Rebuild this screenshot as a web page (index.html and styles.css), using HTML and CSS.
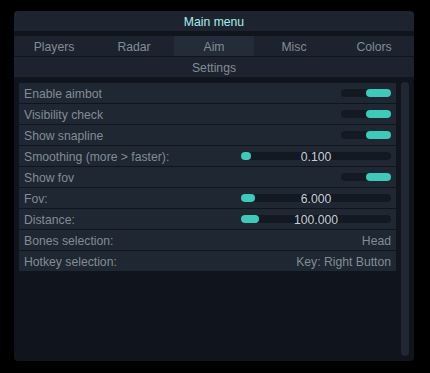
FILE: index.html
```html
<!DOCTYPE html>
<html lang="en">
<head>
  <meta charset="UTF-8">
  <meta name="viewport" content="width=device-width, initial-scale=1.0">
  <title>Main menu</title>
  <link rel="stylesheet" href="styles.css">
</head>
<body>
  <div class="window">
    <div class="title">Main menu</div>

    <!-- tabs -->
    <div class="tabs">
      <div class="tab">Players</div>
      <div class="tab">Radar</div>
      <div class="tab active-tab">Aim</div>
      <div class="tab">Misc</div>
      <div class="tab">Colors</div>
    </div>
    <div class="header">Settings</div>

    <div class="body">
      <div class="list">
        <div class="row">
          <span>Enable aimbot</span>
          <div class="toggle"><div class="knob"></div></div>
        </div>
        <div class="row">
          <span>Visibility check</span>
          <div class="toggle"><div class="knob"></div></div>
        </div>
        <div class="row">
          <span>Show snapline</span>
          <div class="toggle"><div class="knob"></div></div>
        </div>
        <div class="row">
          <span>Smoothing (more &gt; faster):</span>
          <div class="slider"><div class="grab" style="width: 10px"></div><span class="value">0.100</span></div>
        </div>
        <div class="row">
          <span>Show fov</span>
          <div class="toggle"><div class="knob"></div></div>
        </div>
        <div class="row">
          <span>Fov:</span>
          <div class="slider"><div class="grab" style="width: 14px"></div><span class="value">6.000</span></div>
        </div>
        <div class="row">
          <span>Distance:</span>
          <div class="slider"><div class="grab" style="width: 18px"></div><span class="value">100.000</span></div>
        </div>
        <div class="row">
          <span>Bones selection:</span>
          <span>Head</span>
        </div>
        <div class="row">
          <span>Hotkey selection:</span>
          <span>Key: Right Button</span>
        </div>
      </div>
      <div class="scrollbar"></div>
    </div>
  </div>
</body>
</html>
```

FILE: styles.css
```css
body {
  margin: 0;
  background-color: #000;
  font-family: "Liberation Sans", Arial, sans-serif;
  font-size: 12.2px;
  color: #838c96;
}

.window {
  width: 400px;
  height: 350px;
  margin: 11px 0 0 14px;
  background-color: #0f141d;
  border-radius: 4px;
  overflow: hidden;
  display: flex;
  flex-direction: column;
}

.title {
  height: 20px;
  line-height: 23px;
  text-align: center;
  color: #a6eeec;
  background-color: #1d2430;
  margin-bottom: 5px;
}

.tabs {
  display: flex;
  height: 20px;
  background-color: #1c232e;
  border-bottom: 1px solid #10151d;
}

.tab {
  flex: 1;
  text-align: center;
  line-height: 22px;
}

.active-tab {
  background-color: #232c38;
}

.header {
  height: 20px;
  line-height: 22px;
  text-align: center;
  background-color: #1c232e;
}

.body {
  flex: 1;
  display: flex;
  gap: 5px;
  padding: 6px 5px 5px 5px;
}

.list {
  flex: 1;
  display: flex;
  flex-direction: column;
  gap: 1px;
}

.row {
  height: 20px;
  background-color: #1e2732;
  display: flex;
  align-items: center;
  justify-content: space-between;
  padding: 0 5px;
  line-height: 20px;
}

.row > span {
  margin-top: 2px;
}

.toggle {
  width: 50px;
  height: 8px;
  border-radius: 4px;
  background-color: #141a24;
  display: flex;
  justify-content: flex-end;
}

.knob {
  width: 25px;
  height: 8px;
  border-radius: 4px;
  background-color: #3ec9b9;
}

.slider {
  position: relative;
  width: 150px;
  height: 8px;
  border-radius: 4px;
  background-color: #131922;
}

.grab {
  height: 8px;
  border-radius: 4px;
  background-color: #3ec9b9;
}

.value {
  position: absolute;
  left: 0;
  right: 0;
  top: -5px;
  text-align: center;
  color: #c9ced4;
}

.scrollbar {
  width: 8px;
  margin-top: -1px;
  border-radius: 4px;
  background-color: #1e2732;
}
```
